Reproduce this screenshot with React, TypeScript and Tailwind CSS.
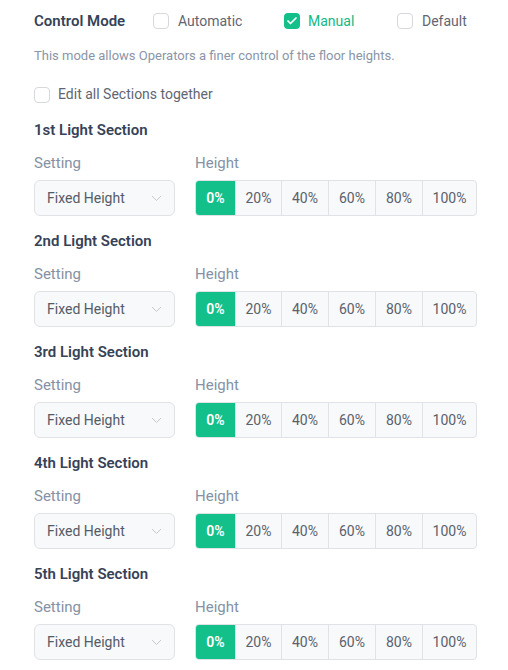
import { Check } from "lucide-react";

const heights = [
  { label: "0%", w: "w-[39px]" },
  { label: "20%", w: "w-[46px]" },
  { label: "40%", w: "w-[47px]" },
  { label: "60%", w: "w-[47px]" },
  { label: "80%", w: "w-[47px]" },
  { label: "100%", w: "w-[54px]" },
];

const sections = ["1st", "2nd", "3rd", "4th", "5th"];

function Box({ checked }: { checked?: boolean }) {
  return checked ? (
    <span className="flex h-4 w-4 items-center justify-center rounded-[4px] bg-[#13c08a]">
      <Check className="h-3 w-3 text-white" strokeWidth={3.5} />
    </span>
  ) : (
    <span className="h-4 w-4 rounded-[4px] border border-[#d5d8dd] bg-white" />
  );
}

function Section({ name }: { name: string }) {
  return (
    <div className="flex flex-col">
      <div className="text-[15px] font-semibold leading-5 text-[#364257]">{name} Light Section</div>
      <div className="mt-[13px] flex gap-[20px]">
        <div className="flex flex-col">
          <div className="text-[15px] leading-5 text-[#8591a5]">Setting</div>
          <div className="mt-[7px] flex h-[36px] w-[141px] items-center justify-between rounded-[6px] border border-[#dfe2e7] bg-[#f8f9fb] pl-[12px] pr-[12px]">
            <span className="text-[14px] text-[#545b66]">Fixed Height</span>
            <svg width="11" height="7" viewBox="0 0 11 7" fill="none">
              <path d="M1 1l4.5 4.5L10 1" stroke="#c4c9d1" strokeWidth="1" />
            </svg>
          </div>
        </div>
        <div className="flex flex-col">
          <div className="text-[15px] leading-5 text-[#8591a5]">Height</div>
          <div className="mt-[7px] flex h-[36px] overflow-hidden rounded-[4px] border border-[#dfe2e7] bg-[#f8f9fb]">
            {heights.map((h, i) => (
              <div
                key={h.label}
                className={`flex items-center justify-center text-[14px] ${h.w} ${
                  i === 0
                    ? "bg-[#13c08a] font-semibold text-white"
                    : "border-l border-[#dfe2e7] text-[#5a616c]"
                }`}
              >
                {h.label}
              </div>
            ))}
          </div>
        </div>
      </div>
    </div>
  );
}

export default function App() {
  return (
    <div className="min-h-screen bg-white pl-[34px] pt-[11px] font-['Roboto',sans-serif]">
      <div className="flex h-5 items-center">
        <span className="w-[119px] text-[15px] font-semibold text-[#364257]">Control Mode</span>
        <label className="flex w-[131px] items-center gap-[9px]">
          <Box />
          <span className="text-[14px] text-[#5f6672]">Automatic</span>
        </label>
        <label className="flex w-[113px] items-center gap-[8px]">
          <Box checked />
          <span className="text-[14px] text-[#13b985]">Manual</span>
        </label>
        <label className="flex items-center gap-[9px]">
          <Box />
          <span className="text-[14px] text-[#5f6672]">Default</span>
        </label>
      </div>
      <p className="mt-[17px] text-[13px] leading-4 text-[#8a95a8]">
        This mode allows Operators a finer control of the floor heights.
      </p>
      <label className="mt-[20px] flex items-center gap-[8px]">
        <Box />
        <span className="text-[14px] text-[#5f6672]">Edit all Sections together</span>
      </label>
      <div className="mt-[15px] flex flex-col gap-[15px]">
        {sections.map((s) => (
          <Section key={s} name={s} />
        ))}
      </div>
    </div>
  );
}
